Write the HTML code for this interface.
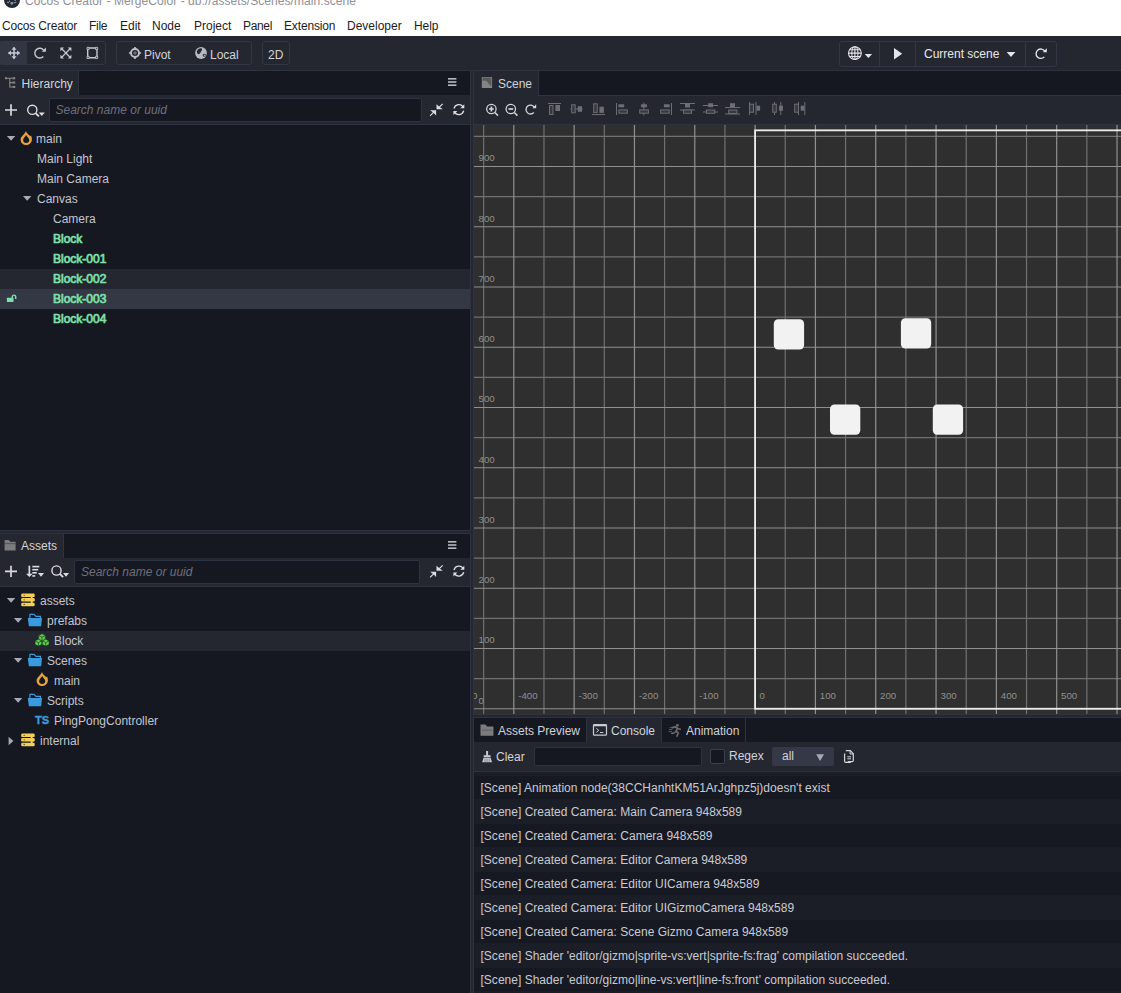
<!DOCTYPE html>
<html lang="en">
<head>
<meta charset="utf-8">
<title>Cocos Creator - MergeColor - db://assets/Scenes/main.scene</title>
<style>
*{box-sizing:border-box;margin:0;padding:0}
html,body{width:1121px;height:993px;overflow:hidden;background:#242730}
body{position:relative;font-family:"Liberation Sans",Arial,sans-serif;font-size:12px;color:#c3c5cf;line-height:1}
.abs{position:absolute}
svg{position:absolute;overflow:visible;display:block}
.t{position:absolute;white-space:nowrap;line-height:14px}
/* ---------- title + menu ---------- */
#titlebar{left:0;top:0;width:1121px;height:36px;background:#fff}
#titlebar .ttl{left:25px;top:-6px;font-size:12px;color:#8f8f96;letter-spacing:0.06px}
#titlebar .logo{left:4px;top:-8.300px;width:16px;height:16px;border-radius:50%;background:#242731}
.mi{position:absolute;top:19px;font-size:12px;color:#1c1c1c;line-height:14px;white-space:nowrap}
/* ---------- toolbar ---------- */
#toolbar{left:0;top:36px;width:1121px;height:34px;background:#242730}
.grp{position:absolute;border:1px solid #323746;border-radius:3px;background:#242730}
.sep{position:absolute;width:1px;background:#323746}
/* ---------- panels ---------- */
.panel{position:absolute;background:#161821;border:1px solid #2e3342;overflow:hidden}
.tabbar{position:absolute;left:0;right:0;top:0;height:25px;background:#161821;border-bottom:1px solid #2e3443}
.tab{position:absolute;top:0;height:25px;background:#242730;border-right:1px solid #2e3342;color:#d2d4dc}
.tab.off{background:#161821;height:25px;border-bottom:1px solid #2e3443;color:#cfd1d9}
.hdr{position:absolute;left:0;right:0;background:#242730;border-bottom:1px solid #2e3342}
.inp{position:absolute;background:#161821;border:1px solid #2e3342;border-radius:2px}
.ph{position:absolute;font-style:italic;color:#6d707c;white-space:nowrap;line-height:14px}
.row{position:absolute;left:0;right:0;height:20px}
.row.hov{background:#242730}
.row.sel{background:#343844}
.nm{position:absolute;top:3px;line-height:14px;white-space:nowrap}
.pf{color:#7de0a8;-webkit-text-stroke:0.7px #7de0a8}
.crow{position:absolute;left:0;right:0;height:23px;background:#171922}
.crow.alt{background:none}
.crow span{position:absolute;left:6.5px;letter-spacing:0.015px;top:5px;line-height:14px;white-space:nowrap;color:#c9cbd4}
</style>
</head>
<body>

<!-- TITLE + MENU -->
<div id="titlebar" class="abs">
  <div class="abs logo"></div>
  <div class="t ttl">Cocos Creator - MergeColor - db://assets/Scenes/main.scene</div>
  <div class="mi" style="left:2px;letter-spacing:-0.17px">Cocos Creator</div>
  <div class="mi" style="left:89px;letter-spacing:-0.3px">File</div>
  <div class="mi" style="left:120px">Edit</div>
  <div class="mi" style="left:152px">Node</div>
  <div class="mi" style="left:194px">Project</div>
  <div class="mi" style="left:243px;letter-spacing:-0.34px">Panel</div>
  <div class="mi" style="left:284px;letter-spacing:-0.15px">Extension</div>
  <div class="mi" style="left:347px">Developer</div>
  <div class="mi" style="left:414px;letter-spacing:-0.1px">Help</div>
</div>

<!-- TOOLBAR -->
<div id="toolbar" class="abs">
  <div class="grp" id="g1" style="left:-1px;top:5px;width:107px;height:24px"></div>
  <div class="abs" id="g1a" style="left:0;top:6px;width:27px;height:22px;background:#323643"></div>
  <div class="grp" id="g2" style="left:116px;top:5px;width:136px;height:24px"></div>
  <div class="grp" id="g3" style="left:262px;top:5px;width:28px;height:24px"></div>
  <div class="grp" id="g4" style="left:839px;top:5px;width:218px;height:26px"></div>
  <div class="sep" style="left:879px;top:6px;height:24px"></div>
  <div class="sep" style="left:915px;top:6px;height:24px"></div>
  <div class="sep" style="left:1025px;top:6px;height:24px"></div>
  <div class="t" style="left:144px;top:12px;color:#d2d4dc">Pivot</div>
  <div class="t" style="left:210px;top:12px;color:#d2d4dc">Local</div>
  <div class="t" style="left:268px;top:12px;color:#d2d4dc">2D</div>
  <div class="t" style="left:924px;top:11px;color:#e6e7ec">Current scene</div>
</div>

<!-- HIERARCHY -->
<div class="panel" id="hier" style="left:-1px;top:70px;width:472px;height:461px">
  <div class="tabbar"></div>
  <div class="tab" style="left:0;width:79px"><span class="t" style="left:21.5px;top:6px">Hierarchy</span></div>
  <div class="hdr" style="top:24px;height:30px"></div>
  <div class="inp" style="left:49px;top:27px;width:373px;height:24px"></div>
  <div class="ph" style="left:55.5px;top:32px">Search name or uuid</div>
  <div id="htree" class="abs" style="left:0;right:0;top:58px;bottom:0">
    <div class="row" style="top:0"><span class="nm" style="left:36px">main</span></div>
    <div class="row" style="top:20px"><span class="nm" style="left:37px">Main Light</span></div>
    <div class="row" style="top:40px"><span class="nm" style="left:37px">Main Camera</span></div>
    <div class="row" style="top:60px"><span class="nm" style="left:37px">Canvas</span></div>
    <div class="row" style="top:80px"><span class="nm" style="left:53px">Camera</span></div>
    <div class="row" style="top:100px"><span class="nm pf" style="left:53px">Block</span></div>
    <div class="row" style="top:120px"><span class="nm pf" style="left:53px">Block-001</span></div>
    <div class="row hov" style="top:140px"><span class="nm pf" style="left:53px">Block-002</span></div>
    <div class="row sel" style="top:160px"><span class="nm pf" style="left:53px">Block-003</span></div>
    <div class="row" style="top:180px"><span class="nm pf" style="left:53px">Block-004</span></div>
  </div>
</div>

<!-- ASSETS -->
<div class="panel" id="assets" style="left:-1px;top:533px;width:472px;height:461px">
  <div class="tabbar"></div>
  <div class="tab" style="left:0;width:64px"><span class="t" style="left:21px;top:5px">Assets</span></div>
  <div class="hdr" style="top:24px;height:29px"></div>
  <div class="inp" style="left:74px;top:26px;width:346px;height:24px"></div>
  <div class="ph" style="left:81px;top:31px">Search name or uuid</div>
  <div id="atree" class="abs" style="left:0;right:0;top:57px;bottom:0">
    <div class="row" style="top:0"><span class="nm" style="left:40px">assets</span></div>
    <div class="row" style="top:20px"><span class="nm" style="left:47px">prefabs</span></div>
    <div class="row hov" style="top:40px"><span class="nm" style="left:54px">Block</span></div>
    <div class="row" style="top:60px"><span class="nm" style="left:47px">Scenes</span></div>
    <div class="row" style="top:80px"><span class="nm" style="left:54px">main</span></div>
    <div class="row" style="top:100px"><span class="nm" style="left:47px">Scripts</span></div>
    <div class="row" style="top:120px"><span class="nm" style="left:54px">PingPongController</span></div>
    <div class="row" style="top:140px"><span class="nm" style="left:40px">internal</span></div>
  </div>
</div>

<!-- SCENE -->
<div class="panel" id="scene" style="left:473px;top:70px;width:649px;height:645px;background:#242730">
  <div class="tabbar"></div>
  <div class="tab" style="left:0;width:65px"><span class="t" style="left:24px;top:6px">Scene</span></div>
  <div class="abs" style="left:0;right:0;top:53px;height:1px;background:#2e3443"></div>
  <div id="viewport" class="abs" style="left:0;top:54px;width:647px;height:589px;background:#2f2f2f;overflow:hidden">
<svg id="grid" style="left:0;top:0" width="647" height="589" viewBox="474 125 647 589">
<path d="M483.66 125V714M543.98 125V714M604.30 125V714M664.62 125V714M724.94 125V714M785.26 125V714M845.58 125V714M905.90 125V714M966.22 125V714M1026.54 125V714M1086.86 125V714M474 678.62H1121M474 618.38H1121M474 558.12H1121M474 497.88H1121M474 437.62H1121M474 377.38H1121M474 317.12H1121M474 256.88H1121M474 196.62H1121M474 136.38H1121" stroke="#717171" stroke-width="1.2" fill="none"/>
<path d="M513.82 125V714M574.14 125V714M634.46 125V714M694.78 125V714M755.10 125V714M815.42 125V714M875.74 125V714M936.06 125V714M996.38 125V714M1056.70 125V714M1117.02 125V714M474 708.75H1121M474 648.50H1121M474 588.25H1121M474 528.00H1121M474 467.75H1121M474 407.50H1121M474 347.25H1121M474 287.00H1121M474 226.75H1121M474 166.50H1121" stroke="#909090" stroke-width="1.2" fill="none"/>
<g font-family="Liberation Sans,Arial,sans-serif" font-size="9.7" fill="#8f8f8f">
<text x="457.9" y="699.2">-500</text>
<text x="518.2" y="699.2">-400</text>
<text x="578.5" y="699.2">-300</text>
<text x="638.9" y="699.2">-200</text>
<text x="699.2" y="699.2">-100</text>
<text x="759.5" y="699.2">0</text>
<text x="819.8" y="699.2">100</text>
<text x="880.1" y="699.2">200</text>
<text x="940.5" y="699.2">300</text>
<text x="1000.8" y="699.2">400</text>
<text x="1061.1" y="699.2">500</text>
<text x="1121.4" y="699.2">600</text>
<text x="478.6" y="703.5">0</text>
<text x="478.6" y="643.3">100</text>
<text x="478.6" y="583.0">200</text>
<text x="478.6" y="522.8">300</text>
<text x="478.6" y="462.6">400</text>
<text x="478.6" y="402.3">500</text>
<text x="478.6" y="342.1">600</text>
<text x="478.6" y="281.8">700</text>
<text x="478.6" y="221.6">800</text>
<text x="478.6" y="161.3">900</text>
</g>
<rect x="755.10" y="130.35" width="386.05" height="578.40" fill="none" stroke="#ededed" stroke-width="1.8"/>
<rect x="773.8" y="319.2" width="30.3" height="30.3" rx="4.5" fill="#f2f2f2"/>
<rect x="900.9" y="318.2" width="30.3" height="30.3" rx="4.5" fill="#f2f2f2"/>
<rect x="830.0" y="404.5" width="30.3" height="30.3" rx="4.5" fill="#f2f2f2"/>
<rect x="932.8" y="404.5" width="30.3" height="30.3" rx="4.5" fill="#f2f2f2"/>
</svg>
  </div>
</div>

<!-- CONSOLE -->
<div class="panel" id="console" style="left:473px;top:717px;width:649px;height:277px">
  <div class="tabbar"></div>
  <div class="tab off" style="left:0;width:113px"><span class="t" style="left:24px;top:6px">Assets Preview</span></div>
  <div class="tab" style="left:113px;width:75px"><span class="t" style="left:24px;top:6px">Console</span></div>
  <div class="tab off" style="left:188px;width:84px"><span class="t" style="left:24px;top:6px">Animation</span></div>
  <div class="hdr" style="top:24px;height:30px"></div>
  <div class="t" style="left:22px;top:32px;color:#d2d4dc">Clear</div>
  <div class="inp" style="left:60px;top:29px;width:168px;height:19px"></div>
  <div class="inp" style="left:236px;top:31px;width:15px;height:15px;border-color:#3b4050"></div>
  <div class="t" style="left:255px;top:31px;color:#d2d4dc">Regex</div>
  <div class="abs" style="left:298px;top:29px;width:62px;height:19px;background:#353846;border-radius:2px"></div>
  <div class="t" style="left:308px;top:31px;color:#d2d4dc">all</div>
  <div id="clist" class="abs" style="left:0;right:0;top:54px;bottom:0;background:#1c1e27">
    <div class="crow" style="top:4px"><span>[Scene] Animation node(38CCHanhtKM51ArJghpz5j)doesn't exist</span></div>
    <div class="crow alt" style="top:28px"><span>[Scene] Created Camera: Main Camera 948x589</span></div>
    <div class="crow" style="top:52px"><span>[Scene] Created Camera: Camera 948x589</span></div>
    <div class="crow alt" style="top:76px"><span>[Scene] Created Camera: Editor Camera 948x589</span></div>
    <div class="crow" style="top:100px"><span>[Scene] Created Camera: Editor UICamera 948x589</span></div>
    <div class="crow alt" style="top:124px"><span>[Scene] Created Camera: Editor UIGizmoCamera 948x589</span></div>
    <div class="crow" style="top:148px"><span>[Scene] Created Camera: Scene Gizmo Camera 948x589</span></div>
    <div class="crow alt" style="top:172px"><span>[Scene] Shader 'editor/gizmo|sprite-vs:vert|sprite-fs:frag' compilation succeeded.</span></div>
    <div class="crow" style="top:196px"><span>[Scene] Shader 'editor/gizmo|line-vs:vert|line-fs:front' compilation succeeded.</span></div>
  </div>
</div>

<!-- ICON OVERLAY (page coordinates) -->
<svg id="ov" style="left:0;top:0;z-index:50;pointer-events:none" width="1121" height="993" viewBox="0 0 1121 993">
<defs>
  <path id="tri" d="M0 0H8.4L4.2 4.7Z"/>
  <g id="redo2"><path d="M3.900 -2.600A4.700 4.700 0 1 0 3.500 3.200" fill="none" stroke="currentColor" stroke-width="1.350"/><path d="M6 -5.500V-1.400H1.900Z" fill="currentColor"/></g>
  <g id="redo"><path d="M3.6 -3.1A4.7 4.7 0 1 0 3.3 3.3" fill="none" stroke="currentColor" stroke-width="1.5"/><path d="M6.6 -5.7V-0.5H1.5Z" fill="currentColor"/></g>
</defs>
<g fill="#8fb4c0"><circle cx="8" cy="2.400" r=".8"/><circle cx="9.600" cy="1.200" r=".6"/><path d="M10.300 2.600C11 1.800 12.200 1.700 12.900 2.300C13.400 2.900 13.300 3.600 12.600 4.100C11.800 4.600 10.900 4.400 10.500 3.900ZM13.400 2.600L16.300 1.800L16.500 2.800L13.700 3.500Z" opacity=".85"/><circle cx="15.200" cy=".5" r=".6"/><circle cx="12" cy="4.800" r=".5"/></g>
<!-- toolbar: transform tools -->
<g color="#c5c7d1" fill="#c5c7d1" stroke="none">
  <path d="M8.6 53H19.4M14 47.6V58.4" stroke="#c5c7d1" stroke-width="1.5" fill="none"/>
  <path d="M14 46.7L16.5 49.7H11.5ZM14 59.2L16.5 56.2H11.5ZM7.9 53L10.9 50.5V55.5ZM20.1 53L17.1 50.5V55.5Z"/>
  <g transform="translate(39.7 53.1) scale(1.04)"><use href="#redo2"/></g>
  <path d="M62 49L69.800 57M69.800 49L62 57" stroke="#c5c7d1" stroke-width="1.200" fill="none"/>
  <path d="M60.400 47.600H64L60.400 51.200ZM71.400 47.600H67.800L71.400 51.200ZM60.400 58.400H64L60.400 54.800ZM71.400 58.400H67.800L71.400 54.800Z"/>
  <rect x="87.700" y="48" width="9.300" height="9.800" rx="1" fill="none" stroke="#c5c7d1" stroke-width="1.400"/>
  <path d="M87 47.300h2.200v2.200h-2.200zM95.500 47.300h2.200v2.200h-2.200zM87 56.300h2.200v2.200h-2.200zM95.500 56.300h2.200v2.200h-2.200z" fill="#4a4d59" stroke="#c5c7d1" stroke-width=".8"/>
</g>
<!-- pivot / local -->
<g fill="none" stroke="#bcbec8">
  <circle cx="135" cy="53" r="4" stroke-width="1.900"/>
  <path d="M135 46.900V49.500M135 56.500V59.100M128.900 53H131.500M138.500 53H141.100" stroke-width="1.700"/>
  <path d="M135 50.800V55.200M132.800 53H137.200" stroke-width="0.900" opacity=".6"/>
</g>
<circle cx="201" cy="53" r="5.900" fill="#b6b8c2"/>
<path d="M197.300 50.300C198 48.900 199.800 48 201.300 48.200C202.300 48.600 202.400 49.600 201.700 50.400C201 51.100 201.200 51.700 200.500 52.400C199.900 53 199.700 53.900 198.900 54.200C198 54.300 197.100 53.300 196.900 52.200C196.800 51.500 197 50.800 197.300 50.300Z" fill="#242730"/><path d="M203 54.200C203.800 53.600 205.200 53.700 205.900 54.300C205.900 55.300 205.400 56.200 204.700 56.700C203.800 57 203 56.600 202.700 55.800C202.500 55.200 202.600 54.600 203 54.200Z" fill="#242730" opacity=".8"/><circle cx="204.600" cy="55.300" r=".6" fill="#b6b8c2"/>
<!-- preview group -->
<g fill="none" stroke="#e4e5ea" stroke-width="1.1">
  <circle cx="854.9" cy="53.1" r="6.4"/>
  <ellipse cx="854.9" cy="53.1" rx="3.1" ry="6.4"/>
  <path d="M854.9 46.7V59.5M848.5 53.1H861.3M849.6 49.700H860.2M849.6 56.5H860.2" />
</g>
<g fill="#e4e5ea">
  <path d="M864.700 54H872.100L868.400 58.100Z"/>
  <path d="M894 47.900V59.5L902.200 53.700Z"/>
  <path d="M1006.600 51.900H1015.400L1011 57Z"/>
</g>
<g color="#e4e5ea"><use href="#redo2" x="1040.800" y="53.700"/></g>
<!-- hierarchy / assets panel icons -->
<defs>
  <path id="tarr" d="M0 0H8.400L4.200 4.700Z" fill="#a7a9b4"/>
  <path id="flame" fill="#e9a23b" fill-rule="evenodd" d="M5.400 0C5.700 2.300 8.100 3.300 9.700 5.300L10.600 4.500C10.900 6.200 11.600 7.400 11.200 9.400C10.700 12.100 8.500 14 5.700 14C2.600 14 0 11.800 0 8.700C0 5.300 3.900 3.700 5.400 0ZM5.500 3.900C4.700 5.900 2.500 7.100 2.500 9.100C2.500 10.900 3.900 12 5.600 12C7.400 12 8.700 10.900 8.700 9.100C8.700 7.100 6.300 5.900 5.500 3.900Z"/>
  <g id="folder"><path d="M2.100 4.400V0.600H6.300L8 2.600H12.600V4.400" fill="none" stroke="#3a9ade" stroke-width="1.200"/><path d="M0 4.200H14.200L13.400 12.350H1.100Z" fill="#3a9ade"/></g>
  <g id="db" fill="#f3cf57"><rect x="0" y="0" width="13.500" height="3.500" rx="1.200"/><rect x="0" y="4.500" width="13.500" height="3.500" rx="1.200"/><rect x="0" y="9.200" width="13.500" height="3.500" rx="1.200"/><rect x="9.500" y="3" width="2" height="7" /><circle cx="3" cy="1.750" r=".7" fill="#5b4a12"/><circle cx="3" cy="6.250" r=".7" fill="#5b4a12"/><circle cx="3" cy="10.950" r=".7" fill="#5b4a12"/></g>
  <g id="srch" fill="none" stroke="#dcdde3"><circle cx="5.400" cy="5.400" r="4.600" stroke-width="1.400"/><path d="M8.700 8.700L12 12" stroke-width="1.900"/><path d="M11.900 8H17.900L14.900 11.600Z" fill="#dcdde3" stroke="none"/></g>
  <g id="plus"><path d="M0 5.700H12M6 0V11.400" stroke="#d9dae0" stroke-width="1.700" fill="none"/></g>
  <g id="collapse" fill="#dcdde3" stroke="none"><path d="M6.400 0.500V5.600H12.700L9.900 3.600L13 0.500L12.200 -0.300L9 2.900Z"/><path d="M6 11.700V6.600H-0.100L2.700 8.600L-0.400 11.700L0.400 12.500L3.600 9.300Z"/></g>
  <g id="sync" fill="none" stroke="#dcdde3" stroke-width="1.300"><path d="M1 4.600A5 5 0 0 1 10.300 3.400M10.700 6.800A5 5 0 0 1 1.400 8"/><path d="M11.300 0.300V4.300H7.300ZM0.400 11.100V7.100H4.400Z" fill="#dcdde3" stroke="none"/></g>
  <g id="menu" fill="#b6b8c2"><rect width="8.400" height="1.600" y="0"/><rect width="8.400" height="1.600" y="3.200"/><rect width="8.400" height="1.600" y="6.400"/></g>
</defs>
<!-- hierarchy tab icon -->
<g fill="#878787" stroke="#878787" stroke-width="1.100">
  <path d="M7 78.200H12.500M9.800 78.200V87H12.500M9.800 82.600H12.500" fill="none"/>
  <rect x="5" y="77.200" width="2" height="2" stroke="none"/><rect x="12.500" y="77.200" width="2.700" height="2.100" stroke="none"/><rect x="12.500" y="81.500" width="2.700" height="2.100" stroke="none"/><rect x="12.500" y="85.900" width="2.700" height="2.100" stroke="none"/>
</g>
<use href="#menu" x="448" y="78"/>
<use href="#plus" x="5" y="104.300"/>
<use href="#srch" x="26.900" y="104.400"/>
<use href="#collapse" x="430.100" y="103.700"/>
<use href="#sync" x="453" y="103.900"/>
<!-- hierarchy tree -->
<use href="#tarr" x="6.900" y="136"/>
<use href="#flame" x="20.600" y="131"/>
<use href="#tarr" x="23" y="196"/>
<g fill="#7de0a8"><rect x="6.900" y="297.800" width="6.600" height="4.300" rx=".5"/><path d="M12.300 298V297A1.700 1.900 0 0 1 15.700 297V298.900" fill="none" stroke="#7de0a8" stroke-width="1.450"/></g>
<!-- assets tab icon -->
<g fill="#7c7c7e"><path d="M4.600 540H8.800L10.300 541.700H15.600V550.600H4.600Z"/><path d="M4.600 543.200H15.600V544.100H4.600Z" fill="#242730" opacity=".5"/></g>
<use href="#menu" x="448" y="541"/>
<use href="#plus" x="5" y="565.700"/>
<g fill="#dcdde3"><rect x="28.500" y="565.700" width="1.700" height="9"/><path d="M26 573.700H32.700L29.350 577.100Z"/><rect x="32.300" y="565.800" width="7" height="1.600"/><rect x="32.300" y="568.900" width="5.900" height="1.600"/><rect x="32.300" y="572" width="4.500" height="1.600"/><rect x="32.300" y="575.100" width="2.900" height="1.600"/><path d="M38 573.100H44.100L41.050 576.800Z"/></g>
<use href="#srch" x="51.100" y="565.100"/>
<use href="#collapse" x="430.100" y="565.200"/>
<use href="#sync" x="453" y="565.400"/>
<!-- assets tree -->
<use href="#tarr" x="6.900" y="598"/>
<use href="#db" x="21.200" y="593.600"/>
<use href="#tarr" x="13.900" y="618"/>
<use href="#folder" x="27.800" y="613.800"/>
<g fill="#5fd14f" stroke="#1c3a18" stroke-width=".5"><path d="M42 633.800L45.300 635.500V639.200L42 640.900L38.700 639.200V635.500Z"/><path d="M38.400 639.200L41.700 640.900V644.400L38.400 646.100L35.100 644.400V640.900Z"/><path d="M45.700 639.200L49 640.900V644.400L45.700 646.100L42.400 644.400V640.900Z"/><path d="M38.700 635.500L42 637.200L45.300 635.500M42 637.200V640.900M35.100 640.900L38.400 642.600L41.700 640.900M38.400 642.600V646.100M42.400 640.900L45.700 642.600L49 640.900M45.700 642.600V646.100" fill="none" stroke="#1f4a1a" stroke-width=".8"/></g>
<use href="#tarr" x="13.900" y="658"/>
<use href="#folder" x="27.800" y="653.800"/>
<use href="#flame" x="36.600" y="672"/>
<use href="#tarr" x="13.900" y="698"/>
<use href="#folder" x="27.800" y="693.800"/>
<text x="35" y="724.300" font-family="Liberation Sans,Arial,sans-serif" font-weight="bold" font-size="11.200" fill="#3a9ade" stroke="#3a9ade" stroke-width=".35">TS</text>
<path d="M8.600 736.800L13.400 741L8.600 745.200Z" fill="#a7a9b4"/>
<use href="#db" x="21.200" y="733.600"/>
<!-- scene + console icons -->
<!-- scene tab icon -->
<g><rect x="481.800" y="77" width="10.300" height="11" fill="#848484"/><path d="M482.600 77.600H491.400V84.500L490.200 86.300C489 83.500 487 80.600 484.600 80.400C483.800 80.400 483.200 80.900 482.600 81.500Z" fill="#5a5a5c"/></g>
<g fill="none" stroke="#d4d6dd" stroke-width="1.250">
  <circle cx="491.400" cy="109" r="4.700"/><path d="M494.900 112.500L498 115.600" stroke-width="1.500"/>
  <path d="M489 109H493.800M491.400 106.600V111.400" stroke-width="1.700"/>
  <circle cx="510.800" cy="109" r="4.700"/><path d="M514.300 112.500L517.400 115.600" stroke-width="1.500"/>
  <path d="M508.400 109H513.200" stroke-width="1.700"/>
</g>
<g color="#d4d6dd"><g transform="translate(530.5 109.5) scale(.95)"><use href="#redo2"/></g></g>
<!-- align icons -->
<g fill="#6d6e74" stroke="none">
  <rect x="548" y="103" width="13" height="1"/><rect x="555.400" y="105" width="4.600" height="6"/>
  <rect x="570.200" y="108.500" width="12.500" height="1"/><rect x="577.700" y="106.200" width="4.300" height="5.600"/>
  <rect x="592" y="114" width="13" height="1"/><rect x="599.400" y="106.700" width="4.500" height="6.200"/>
  <rect x="616" y="103" width="1" height="12"/><rect x="618.400" y="104.300" width="5.800" height="3"/>
  <rect x="643.300" y="102.500" width="1" height="13"/><rect x="641" y="104.300" width="6" height="3"/>
  <rect x="671" y="103" width="1" height="12"/><rect x="663.900" y="104.300" width="5.800" height="3"/>
  <rect x="680" y="103" width="15" height="1"/><rect x="680" y="109.500" width="15" height="1"/><rect x="685" y="104" width="5" height="3.500"/>
  <rect x="703" y="105" width="15" height="1"/><rect x="703" y="111.500" width="15" height="1"/><rect x="708.200" y="103.200" width="4.800" height="4"/>
  <rect x="725" y="107" width="15" height="1"/><rect x="725" y="113.500" width="15" height="1"/><rect x="730" y="103.200" width="5" height="4"/>
  <rect x="749" y="102" width="1" height="13"/><rect x="755.500" y="102" width="1" height="13"/><rect x="756.500" y="105.700" width="3.600" height="5"/>
  <rect x="774" y="102" width="1" height="13"/><rect x="780.300" y="102" width="1" height="13"/><rect x="778.900" y="105.700" width="4.100" height="5"/>
  <rect x="798" y="102" width="1" height="13"/><rect x="804.300" y="102" width="1" height="13"/><rect x="800.700" y="105.700" width="3.600" height="5"/>
</g>
<g fill="#38393f" stroke="#6d6e74" stroke-width="1">
  <rect x="549.500" y="105.500" width="3.500" height="9"/>
  <rect x="571.700" y="104.800" width="3.500" height="8"/>
  <rect x="593.700" y="103.800" width="3.500" height="8.600"/>
  <rect x="618.900" y="109.900" width="8.400" height="3.300"/>
  <rect x="639.700" y="109.900" width="8.700" height="3.300"/>
  <rect x="660.600" y="109.900" width="8.600" height="3.300"/>
  <rect x="683.500" y="110" width="8" height="3.300"/>
  <rect x="706.500" y="110" width="8.200" height="3.300"/>
  <rect x="728.700" y="110" width="8.200" height="3.500"/>
  <rect x="749.500" y="104.200" width="4" height="8"/>
  <rect x="772.700" y="104.200" width="3.600" height="8"/>
  <rect x="794.700" y="104.200" width="3.800" height="8"/>
</g>
<!-- console tabs -->
<g fill="#7c7c7e"><path d="M480.500 724.500H485.500L487 726.400H493.400V735.800H480.500Z"/><path d="M482 729.500H492V730.800H482Z" fill="#62646b"/></g>
<g fill="none" stroke="#c9cbd3"><rect x="593.500" y="724.600" width="13" height="10.600" rx=".8" stroke-width="1.200"/><path d="M593.500 725.500H606.500" stroke-width="1.600"/><path d="M596.300 728.300L598.800 730.300L596.300 732.300M600 732.500H603.300" stroke-width="1"/></g>
<g fill="#6c6e75" stroke="#6c6e75" stroke-linecap="round" stroke-linejoin="round">
  <circle cx="677.400" cy="725.300" r="1.400" stroke="none"/>
  <path d="M672.300 727.600L675.400 726.900L677.300 728.300L676.200 731.300L678.300 733L677 736" fill="none" stroke-width="1.700"/>
  <path d="M677.300 728.500L680.400 729.200M675.800 731.500L673.600 733.300L671.600 733.300" fill="none" stroke-width="1.400"/>
  <path d="M669.300 729.500H672M669 731.500H671.500M670 727.600H671.500" fill="none" stroke-width=".9" opacity=".8"/>
</g>
<!-- console toolbar -->
<g fill="#c9cbd3"><rect x="486.100" y="751" width="2" height="4.600"/><rect x="483.700" y="755.200" width="6.800" height="2"/><path d="M483.600 757.800H490.600L492 762.300H482.200Z"/><path d="M485 758.500V762.300M487.100 758.500V762.300M489.200 758.500V762.300" stroke="#242730" stroke-width=".6" opacity=".7"/></g>
<path d="M816.200 754.200H824L820.100 761Z" fill="#a7a9b4"/>
<g fill="none" stroke="#d4d6dd" stroke-width="1.200"><path d="M845.800 750.700H850.300L853.300 753.700V760.500Q853.300 761.700 852.100 761.700H847.800"/><path d="M844.600 753.400V761.200Q844.600 762.400 845.800 762.400H850.800" /><path d="M850.100 750.900V754H853.100" stroke-width="1"/><path d="M847.300 756.800H851M847.300 758.800H851" stroke-width="1"/></g>
</svg>

</body>
</html>
